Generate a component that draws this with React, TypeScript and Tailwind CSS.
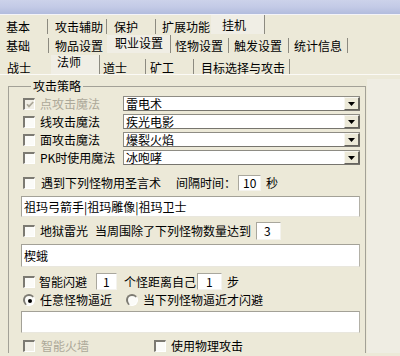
import type { ReactNode } from 'react';

function Check({ checked = false, disabled = false }: { checked?: boolean; disabled?: boolean }) {
  return (
    <span
      className={`flex h-[12px] w-[12px] shrink-0 items-center justify-center border-l-2 border-t-2 border-b border-r border-l-[#7c7a72] border-t-[#7c7a72] border-b-white border-r-white ${
        disabled ? 'bg-[#f1efe6]' : 'bg-[#fbfbf8]'
      }`}
    >
      {checked ? (
        <svg width="8" height="7" viewBox="0 0 8 7">
          <path d="M1 3.2 L3 5.4 L7.2 1" fill="none" stroke={disabled ? '#aca899' : '#000'} strokeWidth="1.7" />
        </svg>
      ) : null}
    </span>
  );
}

function Radio({ checked = false }: { checked?: boolean }) {
  return (
    <span className="flex h-[12px] w-[12px] shrink-0 items-center justify-center rounded-full border-l-2 border-t-2 border-b border-r border-l-[#7c7a72] border-t-[#7c7a72] border-b-white border-r-white bg-[#fbfbf8]">
      {checked ? <span className="h-[4px] w-[4px] rounded-full bg-black" /> : null}
    </span>
  );
}

function Combo({ value }: { value: string }) {
  return (
    <div className="flex h-[15px] w-[237px] border-l border-t border-b border-l-[#8e8c84] border-t-[#8e8c84] border-b-[#77756e] bg-white">
      <span className="flex-1 pl-[2px] text-[12px] leading-[13px]">{value}</span>
      <span className="flex w-[16px] items-center justify-center border-l border-t border-l-[#f7f6f0] border-t-[#f7f6f0] border-r-2 border-b border-r-[#66645e] border-b-[#66645e] bg-[#ece9d8]">
        <svg width="7" height="4" viewBox="0 0 7 4">
          <polygon points="0,0 7,0 3.5,4" fill="#000" />
        </svg>
      </span>
    </div>
  );
}

function Box({ children, className }: { children?: ReactNode; className: string }) {
  return (
    <span
      className={`flex items-center border-l border-t border-l-[#a9a79d] border-t-[#a9a79d] border-b border-r border-b-[#f4f3ee] border-r-[#f4f3ee] bg-white text-[12px] leading-[14px] ${className}`}
    >
      {children}
    </span>
  );
}

function Field({ value, className }: { value?: string; className: string }) {
  return (
    <div
      className={`-ml-[2px] flex w-[339px] items-center border-l border-t border-r border-b border-l-[#a3a197] border-t-[#a3a197] border-r-[#b3b1a7] border-b-[#e9e7de] bg-white pl-[2px] text-[12px] leading-[14px] ${className}`}
    >
      {value}
    </div>
  );
}

function Tab({ label, w, pl, line = true, active = false }: { label: string; w: string; pl: string; line?: boolean; active?: boolean }) {
  return (
    <div
      className={`flex shrink-0 ${w} ${pl} ${line ? 'border-r border-r-[#8c8a80]' : ''} ${
        active ? 'self-stretch items-start bg-[#f0eee5]' : 'h-[15px] items-center'
      }`}
    >
      <span className="leading-[14px]">{label}</span>
    </div>
  );
}

export default function App() {
  return (
    <div className="h-[356px] w-[400px] overflow-hidden bg-[#ece9d8] font-['Noto_Sans_CJK_SC','Noto_Sans',sans-serif] text-[12px] text-black">
      <div className="h-[15px] border-b border-b-[#f4f4f8] bg-gradient-to-b from-[#ccd2ea] via-[#c3cae6] to-[#b2bcdd]" />

      <div className="flex h-[20px] items-end pb-[1px]">
        <Tab label="基本" w="w-[48px]" pl="pl-[6px]" />
        <Tab label="攻击辅助" w="w-[59px]" pl="pl-[7px]" />
        <Tab label="保护" w="w-[49px]" pl="pl-[7px]" />
        <Tab label="扩展功能" w="w-[55px]" pl="pl-[6px]" line={false} />
        <Tab label="挂机" w="w-[54px]" pl="pl-[11px] pt-[3px]" active />
      </div>

      <div className="flex h-[20px] items-end pb-[2px]">
        <Tab label="基础" w="w-[49px]" pl="pl-[6px]" />
        <Tab label="物品设置" w="w-[58px]" pl="pl-[6px]" line={false} />
        <Tab label="职业设置" w="w-[64px]" pl="pl-[8px] pt-[1px]" active />
        <Tab label="怪物设置" w="w-[58px]" pl="pl-[4px]" />
        <Tab label="触发设置" w="w-[60px]" pl="pl-[5px]" />
        <Tab label="统计信息" w="w-[59px]" pl="pl-[5px]" />
      </div>

      <div className="flex h-[20px] items-end border-b border-b-[#fbfaf6]">
        <Tab label="战士" w="w-[51px]" pl="pl-[7px] pt-[3px]" line={false} />
        <Tab label="法师" w="w-[49px]" pl="pl-[6px]" active />
        <Tab label="道士" w="w-[46px]" pl="pl-[3px] pt-[3px]" />
        <Tab label="矿工" w="w-[48px]" pl="pl-[4px] pt-[3px]" />
        <Tab label="目标选择与攻击" w="w-[96px]" pl="pl-[7px] pt-[3px]" />
      </div>

      <div className="flex pt-[4px]">
        <fieldset className="ml-[8px] w-[358px] border-l border-t border-r border-[#a3a197] pl-[14px]">
          <legend className="ml-[8px] px-[2px] leading-[14px]">攻击策略</legend>

          <div className="mt-[3px] flex flex-col gap-[3px]">
            {[
              { label: '点攻击魔法', value: '雷电术', checked: true, disabled: true },
              { label: '线攻击魔法', value: '疾光电影' },
              { label: '面攻击魔法', value: '爆裂火焰' },
              { label: 'PK时使用魔法', value: '冰咆哮' },
            ].map((r) => (
              <div key={r.label} className="flex h-[15px] items-center">
                <Check checked={r.checked} disabled={r.disabled} />
                <span className={`ml-[5px] w-[83px] leading-[14px] ${r.disabled ? 'text-[#aca899]' : ''}`}>{r.label}</span>
                <Combo value={r.value} />
              </div>
            ))}
          </div>

          <div className="mt-[10px] flex h-[16px] items-center">
            <Check />
            <span className="ml-[6px] w-[135px] leading-[14px]">遇到下列怪物用圣言术</span>
            <span className="leading-[14px]">间隔时间：</span>
            <Box className="ml-[2px] h-[16px] w-[23px] pl-[4px]">10</Box>
            <span className="ml-[5px] leading-[14px]">秒</span>
          </div>

          <Field value="祖玛弓箭手|祖玛雕像|祖玛卫士" className="mt-[5px] h-[21px]" />

          <div className="mt-[5px] flex h-[18px] items-center">
            <Check />
            <span className="ml-[5px] w-[55px] leading-[14px]">地狱雷光</span>
            <span className="leading-[14px]">当周围除了下列怪物数量达到</span>
            <Box className="ml-[5px] h-[18px] w-[25px] pl-[7px]">3</Box>
          </div>

          <Field value="楔蛾" className="mt-[4px] h-[23px]" />

          <div className="mt-[6px] flex h-[17px] items-center">
            <Check />
            <span className="ml-[4px] w-[57px] leading-[14px]">智能闪避</span>
            <Box className="h-[17px] w-[21px] pl-[6px]">1</Box>
            <span className="ml-[7px] w-[73px] leading-[14px]">个怪距离自己</span>
            <Box className="h-[17px] w-[25px] pl-[8px]">1</Box>
            <span className="ml-[5px] leading-[14px]">步</span>
          </div>

          <div className="mt-[4px] flex h-[12px] items-center">
            <Radio checked />
            <span className="ml-[5px] w-[86px] leading-[14px]">任意怪物逼近</span>
            <Radio />
            <span className="ml-[5px] leading-[14px]">当下列怪物逼近才闪避</span>
          </div>

          <Field className="mt-[5px] h-[22px]" />

          <div className="mt-[6px] flex h-[14px] items-center">
            <Check disabled />
            <span className="ml-[6px] w-[113px] leading-[14px] text-[#aca899]">智能火墙</span>
            <Check />
            <span className="ml-[5px] leading-[14px]">使用物理攻击</span>
          </div>
        </fieldset>
        <div className="ml-[1px] flex-1 bg-[#efede3]" />
      </div>
    </div>
  );
}
